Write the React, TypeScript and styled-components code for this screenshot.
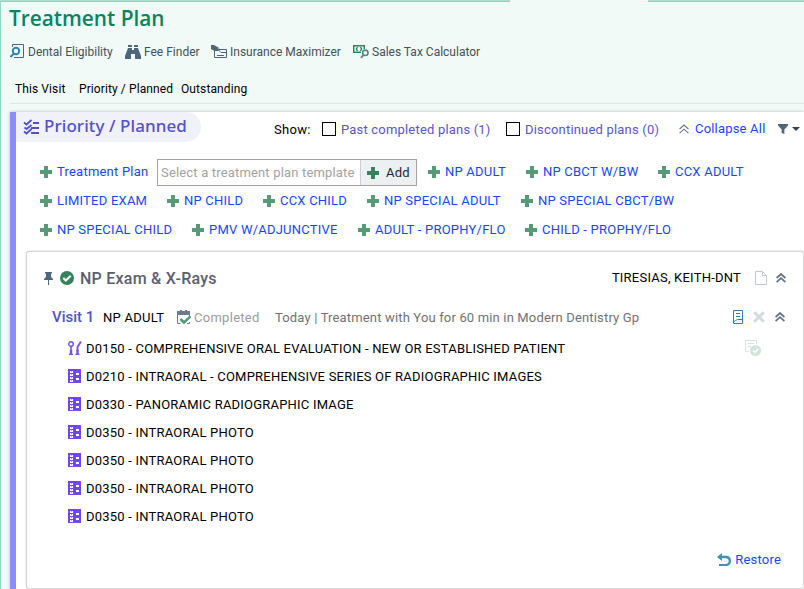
import React from "react";
import styled, { createGlobalStyle } from "styled-components";

const GlobalStyle = createGlobalStyle`
  * { box-sizing: border-box; }
  html, body { margin: 0; padding: 0; overflow: hidden; }
  body { font-family: Roboto, "Liberation Sans", sans-serif; font-size: 13px; color: #000; }
`;

const Page = styled.div`
  width: 804px;
  height: 589px;
  overflow: hidden;
  background: #f1faf7;
  display: flex;
  flex-direction: column;
`;

const TabStrip = styled.div`
  height: 2px;
  flex: none;
  display: flex;
  justify-content: space-between;
`;

const StripPart = styled.div<{ $w: number }>`
  width: ${(p) => p.$w}px;
  height: 2px;
  background: #aae0d0;
  border-bottom: 1px solid #8bd3bf;
`;

const Body = styled.div`
  flex: 1;
  border-left: 1px solid #8fdac5;
  padding-left: 9px;
  display: flex;
  flex-direction: column;
`;

const PageTitle = styled.h1`
  margin: 0 0 0 -1px;
  height: 34px;
  font: 600 20.8px/33px "Open Sans", "Noto Sans", sans-serif;
  color: #08845f;
`;

const Bar = styled.div<{ $h: number }>`
  display: flex;
  align-items: center;
  height: ${(p) => p.$h}px;
  flex: none;
  white-space: nowrap;
`;

const Tool = styled.div<{ $w: number }>`
  width: ${(p) => p.$w}px;
  display: flex;
  align-items: center;
  gap: 3px;
  font-size: 12px;
  color: #45515c;
`;

const VisitTabs = styled.nav`
  display: flex;
  align-items: center;
  height: 34px;
  margin-top: 3px;
  padding: 4px 0 0 5px;
  border-bottom: 1px solid #dde9e5;
  font-size: 12px;
  letter-spacing: 0.1px;
  white-space: nowrap;
`;

const VisitTab = styled.span<{ $w: number }>`
  width: ${(p) => p.$w}px;
`;

const Panel = styled.section`
  margin-top: 8px;
  flex: 1;
  background: #fff;
  border-left: 6px solid #8e8aff;
  box-shadow: 0 0 3px rgba(80, 100, 90, 0.4);
`;

const PanelHead = styled.div`
  display: flex;
  height: 30px;
`;

const PanelTitle = styled.h2`
  margin: 0;
  width: 185px;
  height: 30px;
  padding: 0 0 1px 7px;
  display: flex;
  align-items: center;
  gap: 4px;
  background: #f1f1fa;
  border-radius: 0 15px 15px 0;
  font: 500 17px/26px "Noto Sans", sans-serif;
  letter-spacing: 0.08px;
  color: #5350cb;
  white-space: nowrap;
`;

const TitleText = styled.span`
  padding-bottom: 1px;
`;

const Filters = styled.div`
  display: flex;
  align-items: center;
  flex: 1;
  height: 34px;
  padding-left: 73px;
  letter-spacing: 0.19px;
  white-space: nowrap;
`;

const ShowLabel = styled.span`
  width: 48px;
  letter-spacing: 0.3px;
`;

const CheckLabel = styled.label<{ $w: number }>`
  width: ${(p) => p.$w}px;
  display: flex;
  align-items: center;
  gap: 5px;
  color: #5a55cc;
`;

const Box = styled.span`
  width: 14px;
  height: 14px;
  border: 1px solid #000;
  background: #fff;
`;

const CollapseLink = styled.a`
  width: 99px;
  display: flex;
  align-items: center;
  gap: 6px;
  padding-bottom: 1px;
  color: #1746ff;
`;

const FilterToggle = styled.span`
  display: flex;
  align-items: center;
  gap: 4px;
  padding-bottom: 1px;
`;

const Caret = styled.span`
  border: 4px solid transparent;
  border-top-color: #33424f;
  border-bottom: 0;
`;

const Templates = styled.div`
  height: 94px;
  margin-top: 15px;
  padding-left: 24px;
`;

const ChipRow = styled.div`
  display: flex;
  align-items: center;
  height: 29px;
  white-space: nowrap;
`;

const Chip = styled.a<{ $w: number }>`
  width: ${(p) => p.$w}px;
  display: flex;
  align-items: center;
  gap: 5px;
  color: #1746ff;
  letter-spacing: 0.22px;
`;

const Picker = styled.div`
  width: 260px;
  height: 27px;
  margin: 2px 11px 0 0;
  display: flex;
  border: 1px solid #a3a3a3;
  background: #fff;
`;

const PickerField = styled.div`
  width: 202px;
  padding-left: 3px;
  line-height: 25px;
  letter-spacing: 0.17px;
  color: #a2a2a2;
`;

const AddButton = styled.div`
  flex: 1;
  display: flex;
  align-items: center;
  gap: 7px;
  padding-left: 6px;
  letter-spacing: 0.2px;
  background: #ecf0f3;
  border-left: 1px solid #c9ced1;
  color: #26262a;
`;

const Card = styled.article`
  width: 778px;
  height: 338px;
  margin-left: 10px;
  border: 1px solid #d6d6d6;
  border-radius: 3px;
  box-shadow: 0 0 2px rgba(0, 0, 0, 0.18);
  padding-top: 7px;
  background: #fff;
`;

const CardHead = styled.div`
  display: flex;
  align-items: center;
  gap: 7px;
  height: 38px;
  margin-bottom: 2px;
  padding: 0 17px 0 17px;
  white-space: nowrap;
`;

const CardTitle = styled.h3`
  flex: 1;
  margin: 0 0 0 -1px;
  font-size: 16px;
  font-weight: 500;
  letter-spacing: 0.24px;
  color: #5a6072;
`;

const Provider = styled.span`
  margin-right: 7px;
  padding-bottom: 1px;
  letter-spacing: 0.22px;
`;

const VisitRow = styled.div`
  display: flex;
  align-items: center;
  height: 36px;
  margin-bottom: -1px;
  padding: 0 18px 0 25px;
  white-space: nowrap;
  letter-spacing: 0.16px;
`;

const VisitName = styled.span`
  width: 51px;
  font-size: 15px;
  font-weight: 500;
  letter-spacing: 0;
  color: #5350cb;
`;

const Template = styled.span`
  width: 74px;
  letter-spacing: 0.25px;
`;

const Status = styled.span`
  width: 98px;
  display: flex;
  align-items: center;
  gap: 3px;
  letter-spacing: 0.28px;
  color: #9b9b9b;
`;

const Summary = styled.span`
  flex: 1;
  color: #6f7275;
`;

const Actions = styled.div<{ $gap: number }>`
  display: flex;
  align-items: center;
  gap: ${(p) => p.$gap}px;
`;

const Procedure = styled.div`
  display: flex;
  align-items: center;
  gap: 4px;
  height: 28px;
  padding: 0 42px 0 41px;
  white-space: nowrap;
  letter-spacing: 0.21px;
`;

const ProcedureName = styled.span`
  flex: 1;
`;

const CardFoot = styled.div`
  display: flex;
  align-items: center;
  justify-content: flex-end;
  gap: 4px;
  height: 28px;
  margin-top: 15px;
  padding-right: 22px;
  color: #1746ff;
  letter-spacing: 0.2px;
`;

const Icon = styled.svg`
  flex: none;
  display: block;
`;

const Plus = ({ color = "#569a77" }: { color?: string }) => (
  <Icon width="12" height="12" viewBox="0 0 12 12">
    <path d="M4 0h4v4h4v4H8v4H4V8H0V4h4z" fill={color} />
  </Icon>
);

const EligibilityIcon = () => (
  <Icon width="15" height="15" viewBox="0 0 15 15" fill="none">
    <path d="M2.500 3V.5h11v13H4" stroke="#4f657a" />
    <circle cx="6" cy="7" r="3.200" stroke="#2d86b3" strokeWidth="2" />
    <path d="M4 9.500.5 13" stroke="#2d86b3" strokeWidth="2" />
  </Icon>
);

const BinocularsIcon = () => (
  <Icon width="16" height="14" viewBox="0 0 16 14" fill="#4f657a">
    <path d="M3 0h4v2H3zM9 0h4v2H9zM3 3h4v2h2V3h4l3 8v3h-6V9H6v5H0v-3z" />
  </Icon>
);

const MaximizerIcon = () => (
  <Icon width="16" height="14" viewBox="0 0 16 14" fill="none">
    <path d="M0 0h3l6 3.500H6.500L8 6H3.500L0 4z" fill="#4f657a" />
    <path d="M3.500 5v7.500h12v-8H7l3 3h5M6 10.500h7" stroke="#4f657a" />
  </Icon>
);

const SalesTaxIcon = () => (
  <Icon width="16" height="15" viewBox="0 0 16 15" fill="none">
    <path d="M8 8.300H.7V1.700h10.600V5" stroke="#26865d" strokeWidth="1.400" />
    <path d="M4.800 3.300Q1.800 5 4.800 6.700M7.200 3.300Q10.200 5 7.200 6.700" stroke="#26865d" strokeWidth="1.400" />
    <circle cx="12.300" cy="8.800" r="2.700" stroke="#657d91" strokeWidth="1.600" />
    <path d="m10.500 10.800-2.500 3" stroke="#657d91" strokeWidth="1.900" />
  </Icon>
);

const TasksIcon = () => (
  <Icon width="17" height="16" viewBox="0 0 17 16" fill="none" stroke="#5350cb">
    <path d="m1 3.500 2.500 2L8.500 1M1 12.500l2.500 2 5-4.500M1.500 8.500l2 1.500 5-4" strokeWidth="1.900" />
    <path d="M10 4h6M8 9h8M8 14h8" strokeWidth="2" />
  </Icon>
);

const DoubleUp = ({ width = 1.7, color = "#627487" }: { width?: number; color?: string }) => (
  <Icon width="10" height="10" viewBox="0 0 10 10" fill="none" stroke={color} strokeWidth={width}>
    <path d="M.6 5 5 1l4.400 4M.6 9.200 5 5.200l4.400 4" />
  </Icon>
);

const FunnelIcon = () => (
  <Icon width="10" height="10" viewBox="0 0 11 10" preserveAspectRatio="none" fill="#4f657a">
    <path d="M0 0h11v1.500L7 5.500V10L4 9V5.500L0 1.500z" />
  </Icon>
);

const PinIcon = () => (
  <Icon width="9" height="13" viewBox="0 0 9 13" fill="#4f657a">
    <path d="M1 0h7v1.500H7V5l2 2v1H5v5H4V8H0V7l2-2V1.500H1z" />
  </Icon>
);

const CheckCircle = () => (
  <Icon width="14" height="14" viewBox="0 0 14 14">
    <circle cx="7" cy="7" r="7" fill="#35835b" />
    <path d="m3.300 7 2.500 2.500L10.700 4.800" fill="none" stroke="#fff" strokeWidth="2" />
  </Icon>
);

const CalendarCheck = () => (
  <Icon width="14" height="15" viewBox="0 0 14 15" fill="none">
    <path d="M3 0h2v1h3V0h2v1h3v4H0V1h3z" fill="#6c7c8b" />
    <path d="M.5 4v9.500h3M12.500 4v3M12.500 12v1.500H10" stroke="#6c7c8b" />
    <path d="m3.500 9 3.500 3.500 6.500-6.200" stroke="#4d9a75" strokeWidth="2.500" />
  </Icon>
);

const PageIcon = () => (
  <Icon width="12" height="14" viewBox="0 0 12 14" fill="none" stroke="#c0c8d0">
    <path d="M.5.5h7l4 4v9H.5zM7.500.5v4h4" />
  </Icon>
);

const NoteIcon = () => (
  <Icon width="10" height="14" viewBox="0 0 10 14" fill="none" stroke="#3182ad">
    <path d="M.5.5h9v13h-9zM3 3.500h4M3 6.500h4M.5 12l2-1.500 2-1h5" />
  </Icon>
);

const CrossIcon = () => (
  <Icon width="12" height="12" viewBox="0 0 12 12" stroke="#d3dbdf" strokeWidth="3">
    <path d="m1.200 1.200 9.600 9.600M10.800 1.200 1.200 10.800" />
  </Icon>
);

const NoteDone = () => (
  <Icon width="16" height="16" viewBox="0 0 16 16" fill="none">
    <path d="M11.500 4V.5H.5v11H4M3 3.500h6M3 6.500h3" stroke="#d8e0e0" />
    <circle cx="10.500" cy="10.500" r="5.500" fill="#d0e4da" />
    <path d="m8 10.500 2 2 3.200-3.500" stroke="#fff" strokeWidth="1.500" />
  </Icon>
);

const ExamIcon = () => (
  <Icon width="14" height="14" viewBox="0 0 14 14" fill="none" stroke="#7350ef">
    <circle cx="3" cy="3" r="2.300" strokeWidth="1.400" />
    <path d="M3 5v5" strokeWidth="1.600" />
    <path d="M3 9v4M9.500 9v4" strokeWidth="2.400" />
    <path d="M1 13.400h4M7.500 13.400h4" strokeWidth="1.200" />
    <path d="M9.500 10V6L13 .5" strokeWidth="1.900" />
  </Icon>
);

const FilmIcon = () => (
  <Icon width="14" height="14" viewBox="0 0 14 14">
    <path d="M0 0h13v14H0z" fill="#7046f5" />
    <path d="M2 2h3v2H2zM2 5h3v2H2zM2 8h3v2H2zM2 11h3v2H2zM8 4h3v2H8zM8 9h3v2H8z" fill="#fff" />
    <path d="M3 2h1v1H3zM3 5h1v1H3zM3 8h1v1H3zM3 11h1v1H3z" fill="#b9a4ff" />
  </Icon>
);

const RestoreIcon = () => (
  <Icon width="14" height="13" viewBox="0 0 14 13">
    <path d="M5 0v2.700h4C12 2.700 14 4.500 14 7.700S12 13 9 13H2v-2h6.500c2 0 3.200-1.200 3.200-3s-1.200-2.800-3.200-2.800H5V8L0 4z" fill="#468eb5" />
  </Icon>
);

const secondRow: [string, number][] = [["LIMITED EXAM", 127], ["NP CHILD", 96], ["CCX CHILD", 104], ["NP SPECIAL ADULT", 154], ["NP SPECIAL CBCT/BW", 160]];
const thirdRow: [string, number][] = [["NP SPECIAL CHILD", 152], ["PMV W/ADJUNCTIVE", 166], ["ADULT - PROPHY/FLO", 167], ["CHILD - PROPHY/FLO", 160]];

const procedures = [
  "D0150 - COMPREHENSIVE ORAL EVALUATION - NEW OR ESTABLISHED PATIENT",
  "D0210 - INTRAORAL - COMPREHENSIVE SERIES OF RADIOGRAPHIC IMAGES",
  "D0330 - PANORAMIC RADIOGRAPHIC IMAGE",
  "D0350 - INTRAORAL PHOTO",
  "D0350 - INTRAORAL PHOTO",
  "D0350 - INTRAORAL PHOTO",
  "D0350 - INTRAORAL PHOTO",
];

const TemplateChip = ({ name, width }: { name: string; width: number }) => (
  <Chip $w={width}><Plus />{name}</Chip>
);

export default function App() {
  return (
    <Page>
      <GlobalStyle />
      <TabStrip><StripPart $w={510} /><StripPart $w={156} /></TabStrip>
      <Body>
        <PageTitle>Treatment Plan</PageTitle>
        <Bar $h={31}>
          <Tool $w={115}><EligibilityIcon />Dental Eligibility</Tool>
          <Tool $w={86}><BinocularsIcon />Fee Finder</Tool>
          <Tool $w={142}><MaximizerIcon />Insurance Maximizer</Tool>
          <Tool $w={140}><SalesTaxIcon />Sales Tax Calculator</Tool>
        </Bar>
        <VisitTabs>
          <VisitTab $w={64}>This Visit</VisitTab>
          <VisitTab $w={102}>Priority / Planned</VisitTab>
          <VisitTab $w={80}>Outstanding</VisitTab>
        </VisitTabs>
        <Panel>
          <PanelHead>
            <PanelTitle><TasksIcon /><TitleText>Priority / Planned</TitleText></PanelTitle>
            <Filters>
              <ShowLabel>Show:</ShowLabel>
              <CheckLabel $w={184}><Box />Past completed plans (1)</CheckLabel>
              <CheckLabel $w={173}><Box />Discontinued plans (0)</CheckLabel>
              <CollapseLink><DoubleUp width={1.1} />Collapse All</CollapseLink>
              <FilterToggle><FunnelIcon /><Caret /></FilterToggle>
            </Filters>
          </PanelHead>
          <Templates>
            <ChipRow>
              <TemplateChip name="Treatment Plan" width={117} />
              <Picker>
                <PickerField>Select a treatment plan template</PickerField>
                <AddButton><Plus color="#35835b" />Add</AddButton>
              </Picker>
              <TemplateChip name="NP ADULT" width={98} />
              <TemplateChip name="NP CBCT W/BW" width={132} />
              <TemplateChip name="CCX ADULT" width={100} />
            </ChipRow>
            <ChipRow>{secondRow.map(([n, w]) => <TemplateChip key={n} name={n} width={w} />)}</ChipRow>
            <ChipRow>{thirdRow.map(([n, w]) => <TemplateChip key={n} name={n} width={w} />)}</ChipRow>
          </Templates>
          <Card>
            <CardHead>
              <PinIcon />
              <CheckCircle />
              <CardTitle>NP Exam &amp; X-Rays</CardTitle>
              <Provider>TIRESIAS, KEITH-DNT</Provider>
              <Actions $gap={9}><PageIcon /><DoubleUp /></Actions>
            </CardHead>
            <VisitRow>
              <VisitName>Visit 1</VisitName>
              <Template>NP ADULT</Template>
              <Status><CalendarCheck />Completed</Status>
              <Summary>Today | Treatment with You for 60 min in Modern Dentistry Gp</Summary>
              <Actions $gap={10}><NoteIcon /><CrossIcon /><DoubleUp /></Actions>
            </VisitRow>
            {procedures.map((name, i) => (
              <Procedure key={i}>
                {i === 0 ? <ExamIcon /> : <FilmIcon />}
                <ProcedureName>{name}</ProcedureName>
                {i === 0 && <NoteDone />}
              </Procedure>
            ))}
            <CardFoot><RestoreIcon />Restore</CardFoot>
          </Card>
        </Panel>
      </Body>
    </Page>
  );
}
